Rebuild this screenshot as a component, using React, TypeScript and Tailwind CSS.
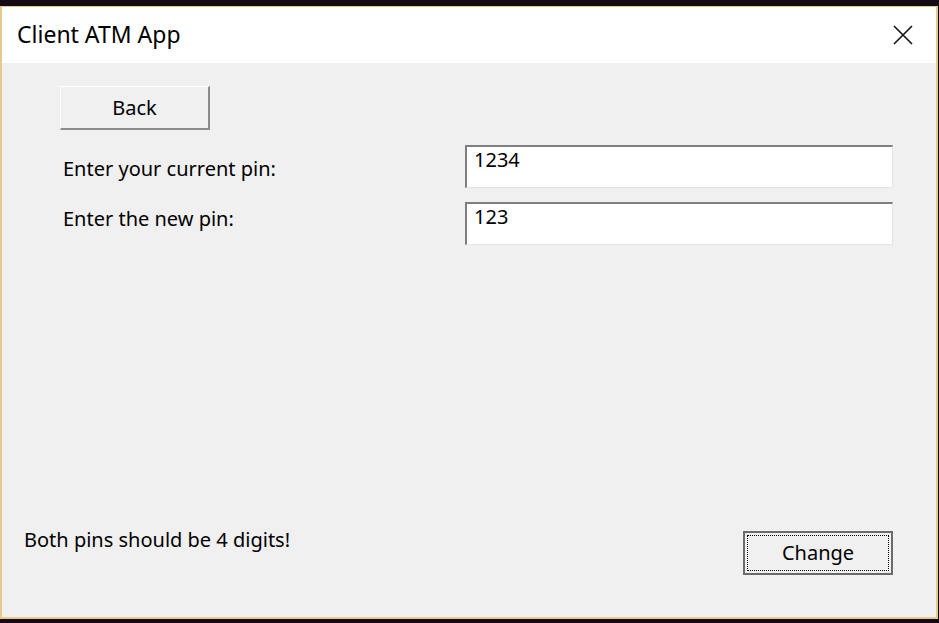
import React from "react";

const font = { fontFamily: '"Noto Sans", "Open Sans", sans-serif' };

function CloseIcon() {
  return (
    <svg width="20" height="20" viewBox="0 0 20 20" className="block">
      <path d="M1 1 L19 19 M19 1 L1 19" stroke="#111" strokeWidth="1.6" fill="none" />
    </svg>
  );
}

export default function App() {
  return (
    <div
      className="w-[939px] h-[623px] bg-[#140b12] pt-[6px] pr-[1px] pb-[4px] overflow-hidden"
      style={font}
    >
      <div className="h-full flex flex-col border-2 border-t border-[#e8c98c] bg-[#f0f0f0] text-black">
        {/* title bar */}
        <div className="h-[56px] bg-white flex items-center justify-between pl-[15px] pr-[23px]">
          <span className="text-[23px] leading-none pb-[1px]">Client ATM App</span>
          <CloseIcon />
        </div>

        {/* body */}
        <div className="flex-1 flex flex-col">
          <div className="pt-[23px] pl-[58px]">
            <button className="w-[150px] h-[44px] bg-[#f0f0f0] border-t border-l border-white border-b-2 border-r-2 border-b-[#8c8c8c] border-r-[#8c8c8c] text-[20px] leading-none">
              Back
            </button>
          </div>

          <div className="mt-[15px] flex items-start pl-[61px]">
            <span className="w-[402px] text-[20px] leading-[20px] pt-[14px]">Enter your current pin:</span>
            <div className="w-[428px] h-[43px] bg-white border-t-2 border-l-2 border-[#7f7f7f] border-b border-r border-b-[#e3e3e3] border-r-[#e3e3e3] pl-[7px] text-[20px] leading-[26px]">
              1234
            </div>
          </div>

          <div className="mt-[14px] flex items-start pl-[61px]">
            <span className="w-[402px] text-[20px] leading-[20px] pt-[7px]">Enter the new pin:</span>
            <div className="w-[428px] h-[43px] bg-white border-t-2 border-l-2 border-[#7f7f7f] border-b border-r border-b-[#e3e3e3] border-r-[#e3e3e3] pl-[7px] text-[20px] leading-[26px]">
              123
            </div>
          </div>

          <div className="flex-1" />

          <div className="flex items-start justify-between pl-[22px] pr-[43px] pb-[42px]">
            <span className="text-[20px] leading-[18px]">Both pins should be 4 digits!</span>
            <button className="w-[150px] h-[44px] bg-[#f0f0f0] border-2 border-[#6b6b6b] p-[2px]">
              <div className="h-full w-full border border-dotted border-black flex items-center justify-center text-[20px] leading-none">
                Change
              </div>
            </button>
          </div>
        </div>
      </div>
    </div>
  );
}
